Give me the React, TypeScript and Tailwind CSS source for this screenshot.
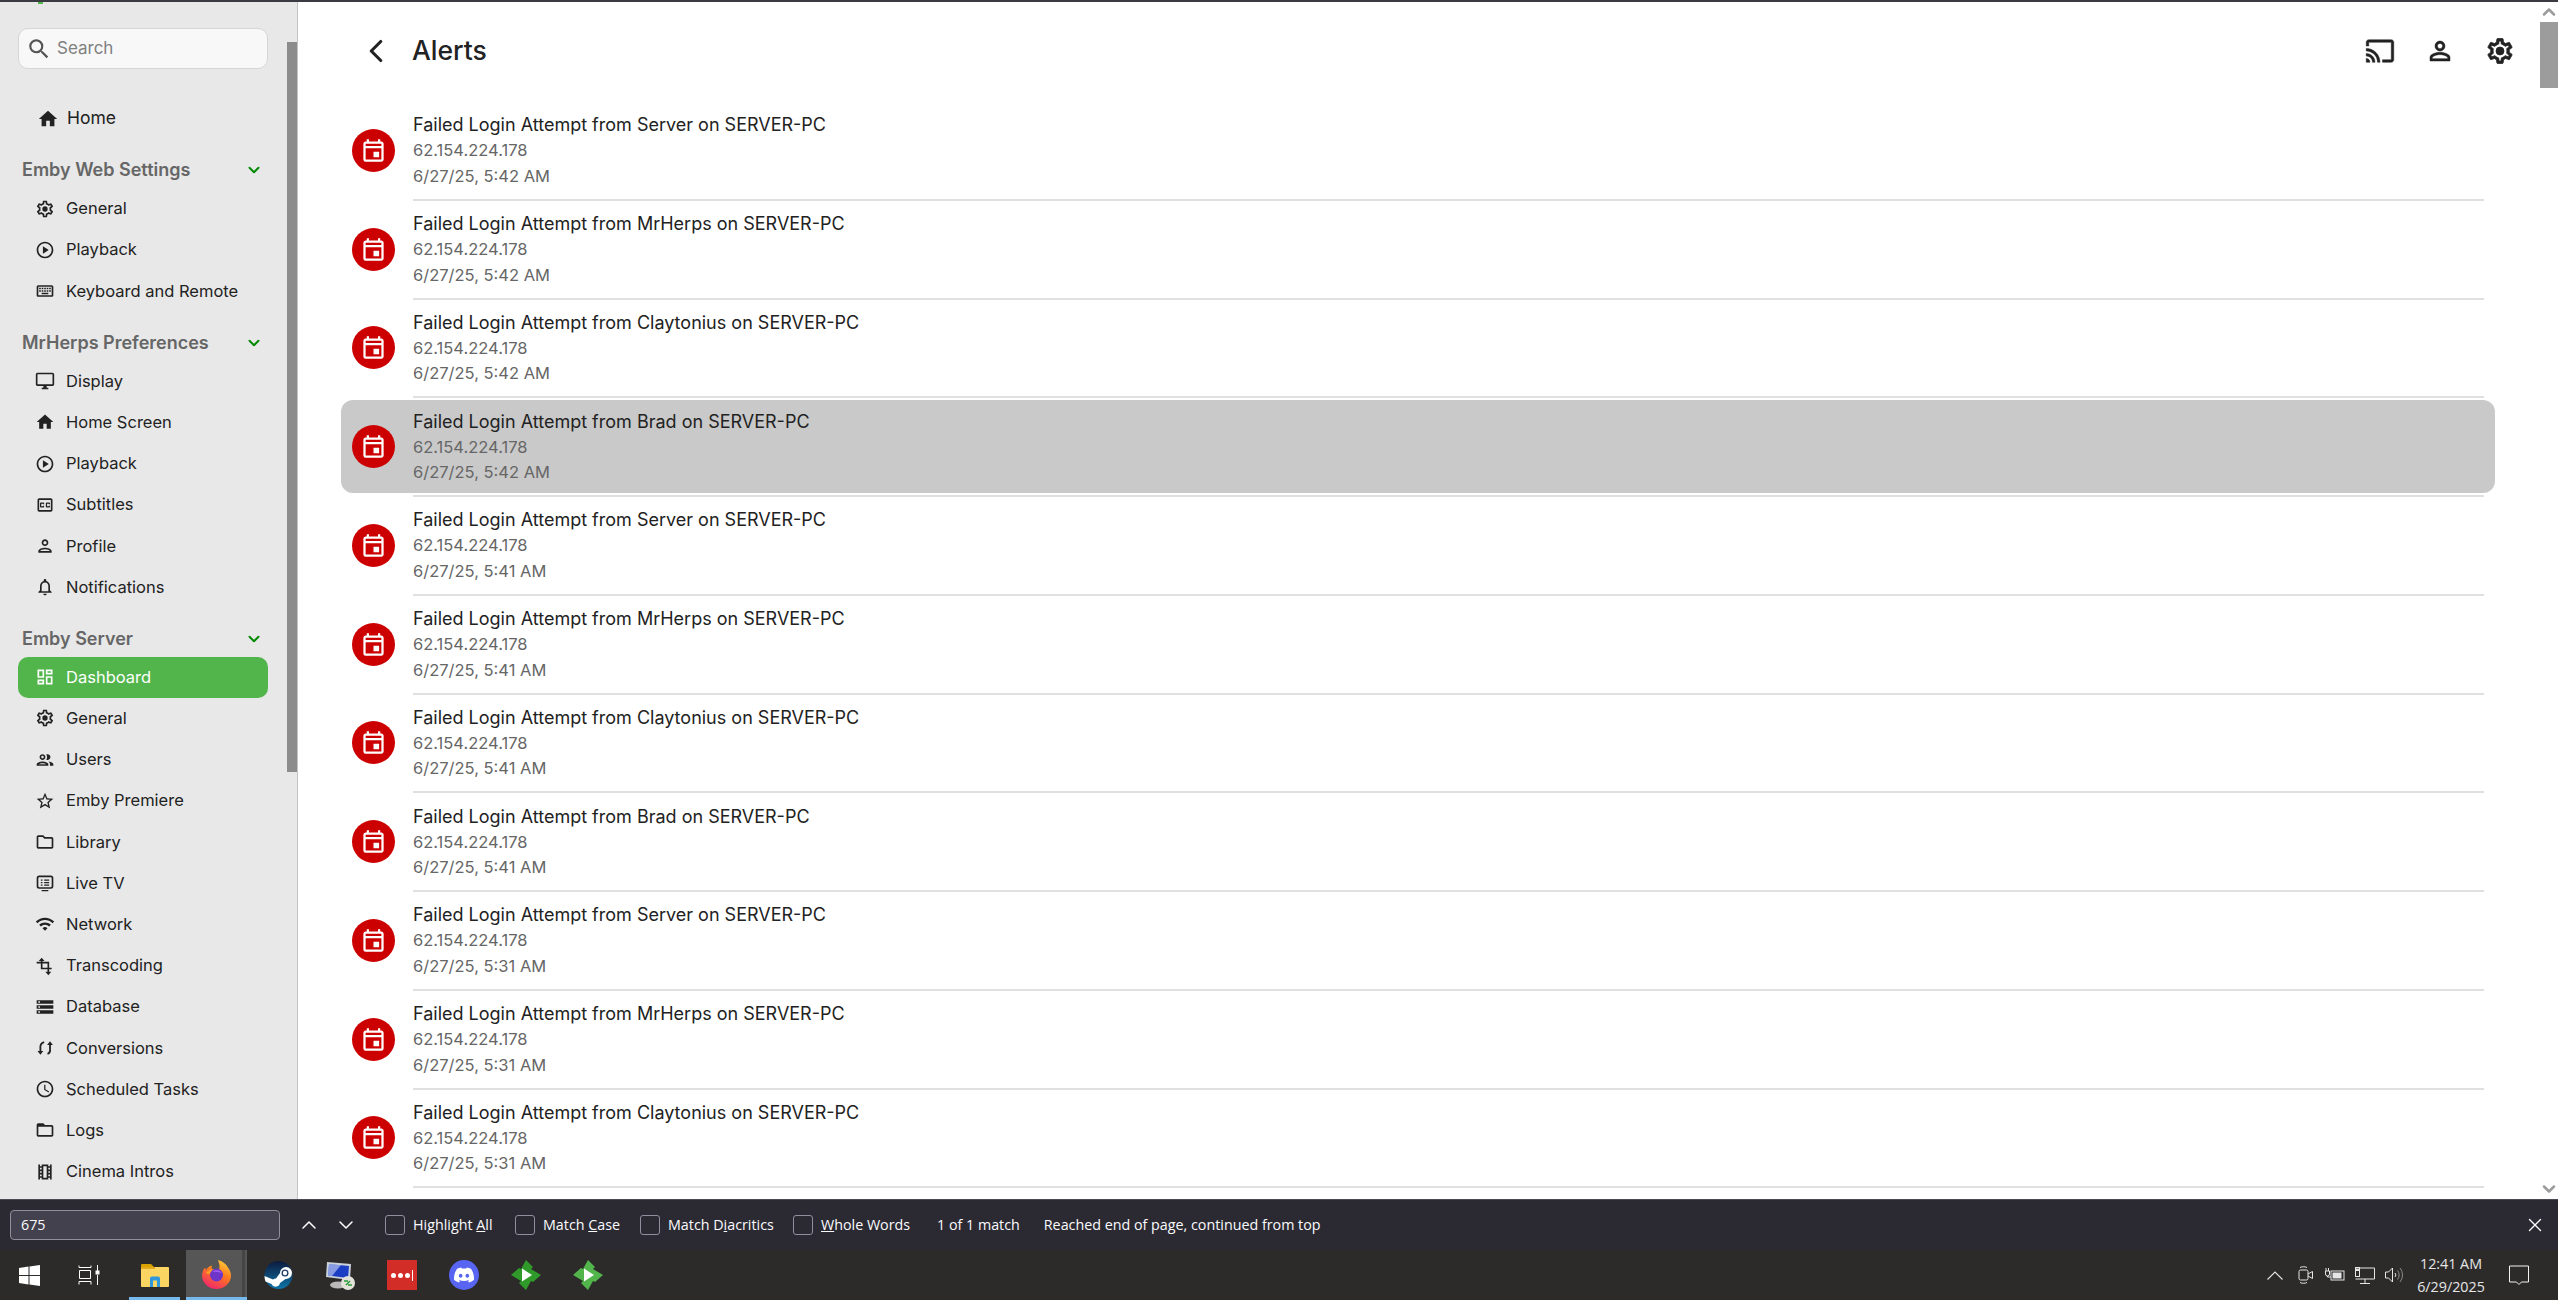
import React from 'react';
import {
  MdHome, MdOutlinePlayCircle, MdOutlineKeyboard, MdOutlineDesktopWindows,
  MdOutlineClosedCaption, MdOutlinePerson, MdOutlineNotifications, MdOutlineDashboard, MdOutlinePeople,
  MdOutlineStarBorder, MdOutlineFolder, MdWifi, MdStorage,
  MdOutlineSchedule, MdOutlineFolderOpen, MdOutlineLocalMovies, MdOutlineEvent, MdSearch,
} from 'react-icons/md';
import { ChevronDown, ChevronLeft, ChevronUp, X } from 'lucide-react';

const sans = "font-['Inter',sans-serif]";

type IconProps = { className?: string };
type NavItem = { label: string; icon: React.ComponentType<IconProps>; active?: boolean };

// outlined gear, the app draws it with a solid dot in the middle
const GearIcon = ({ className }: IconProps) => (
  <svg viewBox="0 0 24 24" fill="currentColor" className={className}>
    <path d="M19.43 12.98c.04-.32.07-.64.07-.98 0-.34-.03-.66-.07-.98l2.11-1.65c.19-.15.24-.42.12-.64l-2-3.46c-.09-.16-.26-.25-.44-.25-.06 0-.12.01-.17.03l-2.49 1c-.52-.4-1.08-.73-1.69-.98l-.38-2.65C14.46 2.18 14.25 2 14 2h-4c-.25 0-.46.18-.49.42l-.38 2.65c-.61.25-1.17.59-1.69.98l-2.49-1c-.06-.02-.12-.03-.18-.03-.17 0-.34.09-.43.25l-2 3.46c-.13.22-.07.49.12.64l2.11 1.65c-.04.32-.07.65-.07.98 0 .33.03.66.07.98l-2.11 1.65c-.19.15-.24.42-.12.64l2 3.46c.09.16.26.25.44.25.06 0 .12-.01.17-.03l2.49-1c.52.4 1.08.73 1.69.98l.38 2.65c.03.24.24.42.49.42h4c.25 0 .46-.18.49-.42l.38-2.65c.61-.25 1.17-.59 1.69-.98l2.49 1c.06.02.12.03.18.03.17 0 .34-.09.43-.25l2-3.46c.12-.22.07-.49-.12-.64l-2.11-1.65zm-1.98-1.71c.04.31.05.52.05.73 0 .21-.02.43-.05.73l-.14 1.13.89.7 1.08.84-.7 1.21-1.27-.51-1.04-.42-.9.68c-.43.32-.84.56-1.25.73l-1.06.43-.16 1.13-.2 1.35h-1.4l-.19-1.35-.16-1.13-1.06-.43c-.43-.18-.83-.41-1.23-.71l-.91-.7-1.06.43-1.27.51-.7-1.21 1.08-.84.89-.7-.14-1.13c-.03-.31-.05-.54-.05-.74s.02-.43.05-.73l.14-1.13-.89-.7-1.08-.84.7-1.21 1.27.51 1.04.42.9-.68c.43-.32.84-.56 1.25-.73l1.06-.43.16-1.13.2-1.35h1.39l.19 1.35.16 1.13 1.06.43c.43.18.83.41 1.23.71l.91.7 1.06-.43 1.27-.51.7 1.21-1.07.85-.89.7.14 1.13z" />
    <circle cx="12" cy="12" r="3.2" />
  </svg>
);

const CastIcon = ({ className }: IconProps) => (
  <svg viewBox="0 0 24 24" fill="currentColor" stroke="currentColor" strokeWidth="0.4" className={className}>
    <path d="M21 3H3c-1.100 0-2 .9-2 2v3h2V5h18v14h-7v2h7c1.100 0 2-.9 2-2V5c0-1.100-.9-2-2-2zM1 18v3h3c0-1.660-1.340-3-3-3zm0-4v2c2.760 0 5 2.240 5 5h2c0-3.870-3.130-7-7-7zm0-4v2c4.970 0 9 4.030 9 9h2c0-6.080-4.930-11-11-11z" />
  </svg>
);

const PersonIcon = ({ className }: IconProps) => (
  <svg viewBox="0 0 24 24" fill="currentColor" stroke="currentColor" strokeWidth="0.4" className={className}>
    <path d="M12 5.900c1.160 0 2.100.94 2.100 2.100s-.94 2.100-2.100 2.100S9.900 9.160 9.900 8s.94-2.100 2.100-2.100m0 9c2.970 0 6.100 1.460 6.100 2.100v1.100H5.900V17c0-.64 3.130-2.100 6.100-2.100M12 4C9.790 4 8 5.790 8 8s1.790 4 4 4 4-1.790 4-4-1.790-4-4-4zm0 9c-2.670 0-8 1.340-8 4v3h16v-3c0-2.660-5.330-4-8-4z" />
  </svg>
);

const LiveTvIcon = ({ className }: IconProps) => (
  <svg viewBox="0 0 24 24" fill="none" stroke="currentColor" strokeWidth="2" className={className}>
    <rect x="3" y="4" width="18" height="14" rx="2" />
    <path d="M8 21h8M7 8.500h2M11 8.500h6M7 11.500h2M11 11.500h6M7 14.500h2M11 14.500h6" strokeWidth="1.500" />
  </svg>
);

const TranscodeIcon = ({ className }: IconProps) => (
  <svg viewBox="0 0 24 24" fill="none" stroke="currentColor" strokeWidth="2" className={className}>
    <path d="M8 4v11h12M2 8h14v13" />
    <path d="M4.500 6 8 2l3.500 4ZM12.500 19h7L16 23Z" fill="currentColor" stroke="none" />
  </svg>
);

const ConvertIcon = ({ className }: IconProps) => (
  <svg viewBox="0 0 24 24" fill="none" stroke="currentColor" strokeWidth="2.200" className={className}>
    <path d="M11 5C7 6 6 9 6.500 13V18M15 19c2-.5 3.500-3 3-7V7" />
    <path d="M3 15.500h7L6.500 20ZM14.500 8.500h7L18 4Z" fill="currentColor" stroke="none" />
  </svg>
);

const webSettings: NavItem[] = [
  { label: 'General', icon: GearIcon },
  { label: 'Playback', icon: MdOutlinePlayCircle },
  { label: 'Keyboard and Remote', icon: MdOutlineKeyboard },
];

const preferences: NavItem[] = [
  { label: 'Display', icon: MdOutlineDesktopWindows },
  { label: 'Home Screen', icon: MdHome },
  { label: 'Playback', icon: MdOutlinePlayCircle },
  { label: 'Subtitles', icon: MdOutlineClosedCaption },
  { label: 'Profile', icon: MdOutlinePerson },
  { label: 'Notifications', icon: MdOutlineNotifications },
];

const server: NavItem[] = [
  { label: 'Dashboard', icon: MdOutlineDashboard, active: true },
  { label: 'General', icon: GearIcon },
  { label: 'Users', icon: MdOutlinePeople },
  { label: 'Emby Premiere', icon: MdOutlineStarBorder },
  { label: 'Library', icon: MdOutlineFolder },
  { label: 'Live TV', icon: LiveTvIcon },
  { label: 'Network', icon: MdWifi },
  { label: 'Transcoding', icon: TranscodeIcon },
  { label: 'Database', icon: MdStorage },
  { label: 'Conversions', icon: ConvertIcon },
  { label: 'Scheduled Tasks', icon: MdOutlineSchedule },
  { label: 'Logs', icon: MdOutlineFolderOpen },
  { label: 'Cinema Intros', icon: MdOutlineLocalMovies },
];

const alerts = [
  ['Server', '5:42'], ['MrHerps', '5:42'], ['Claytonius', '5:42'], ['Brad', '5:42'],
  ['Server', '5:41'], ['MrHerps', '5:41'], ['Claytonius', '5:41'], ['Brad', '5:41'],
  ['Server', '5:31'], ['MrHerps', '5:31'], ['Claytonius', '5:31'],
];

function SideItem({ item }: { item: NavItem }) {
  const Icon = item.icon;
  return (
    <div className={`flex h-[41.2px] items-center gap-[11px] rounded-[10px] pl-[17px] text-[16.5px] ${item.active ? 'bg-[#52b54b] text-white' : 'text-[#222222]'}`}>
      <Icon className="h-5 w-5 shrink-0" />
      <span>{item.label}</span>
    </div>
  );
}

function SideHeading({ title }: { title: string }) {
  return (
    <div className="flex h-[49px] items-end justify-between pb-[6px] pl-1 pr-[5px]">
      <span className="text-[18px] leading-6 font-semibold text-[#666666]">{title}</span>
      <ChevronDown className="mb-[3px] h-[18px] w-[18px] text-[#008a00]" strokeWidth={2.6} />
    </div>
  );
}

function Sidebar() {
  return (
    <aside className="relative h-full w-[298px] shrink-0 overflow-hidden border-r border-[#c4c4c4] bg-[#e8e8e8]">
      <div className="w-[250px] ml-[18px] pt-[26px]">
        <div className="flex h-[41px] items-center gap-[5px] rounded-[10px] border border-[#d6d6d6] bg-[#f8f8f8] pl-[7px] text-[17px] text-[#808080]">
          <MdSearch className="h-[26px] w-[26px] text-[#555555]" />
          <span>Search</span>
        </div>
        <div className="mt-[29px] flex h-[41px] items-center gap-[8px] pl-[19px] text-[17.5px] text-[#222222]">
          <MdHome className="h-[22px] w-[22px]" />
          <span>Home</span>
        </div>
        <SideHeading title="Emby Web Settings" />
        {webSettings.map((item) => <SideItem key={item.label} item={item} />)}
        <SideHeading title="MrHerps Preferences" />
        {preferences.map((item) => <SideItem key={item.label} item={item} />)}
        <SideHeading title="Emby Server" />
        {server.map((item) => <SideItem key={item.label} item={item} />)}
      </div>
      <div className="absolute top-0 left-[38px] h-[2px] w-[5px] bg-[#52b54b]" />
      <div className="absolute top-[40px] right-0 h-[730px] w-[10px] bg-[#8c8c8c]" />
    </aside>
  );
}

function AlertRow({ name, time, selected }: { name: string; time: string; selected?: boolean }) {
  return (
    <div className="flex h-[98.75px] flex-col">
      <div className={`flex flex-1 items-center gap-[18px] rounded-[12px] pl-[11px] my-[2px] ${selected ? 'bg-[#c9c9c9]' : ''}`}>
        <div className="flex h-[43px] w-[43px] shrink-0 items-center justify-center rounded-full bg-[#cc0000] text-white">
          <MdOutlineEvent className="h-[27px] w-[27px]" />
        </div>
        <div className="flex flex-col">
          <span className="text-[18px] leading-[26px] text-[#222222]">Failed Login Attempt from {name} on SERVER-PC</span>
          <span className="text-[16.5px] leading-[25.5px] text-[#666666]">62.154.224.178</span>
          <span className="text-[16.5px] leading-[24.5px] text-[#666666]">6/27/25, {time} AM</span>
        </div>
      </div>
      <div className="ml-[72px] mr-[11px] h-[2px] shrink-0 bg-[#e0e0e0]" />
    </div>
  );
}

function Main() {
  return (
    <main className="relative flex min-w-0 flex-1 overflow-hidden bg-white">
      <div className="min-w-0 flex-1 pl-[43px] pr-[45px]">
        <header className="flex h-[100px] items-center pb-[2px]">
          <ChevronLeft className="ml-[16px] h-[38px] w-[38px] shrink-0 text-[#222222]" strokeWidth={2} />
          <h1 className="ml-[17px] text-[26.5px] font-medium text-[#222222]">Alerts</h1>
          <div className="ml-auto mr-[-20px] flex items-center gap-[30px] text-[#222222]">
            <CastIcon className="h-[30px] w-[30px]" />
            <PersonIcon className="h-[30px] w-[30px]" />
            <GearIcon className="h-[30px] w-[30px] stroke-current stroke-[0.6px]" />
          </div>
        </header>
        {alerts.map(([name, time], i) => (
          <AlertRow key={i} name={name} time={time} selected={i === 3} />
        ))}
      </div>
      <div className="flex w-[18px] shrink-0 flex-col items-center justify-between">
        <div className="flex w-full flex-col items-center">
          <ChevronUp className="h-5 w-5 text-[#9c9c9c]" strokeWidth={3} />
          <div className="h-[66px] w-full bg-[#9c9c9c]" />
        </div>
        <ChevronDown className="h-5 w-5 text-[#9c9c9c]" strokeWidth={3} />
      </div>
    </main>
  );
}

function FindCheck({ label, width }: { label: [string, string, string]; width: string }) {
  return (
    <div className={`flex items-center gap-2 ${width}`}>
      <div className="h-5 w-5 shrink-0 rounded-[3px] border border-[#8f8f9d]" />
      <span className="whitespace-nowrap">
        {label[0]}<span className="underline">{label[1]}</span>{label[2]}
      </span>
    </div>
  );
}

function FindBar() {
  return (
    <div className="flex h-[51px] shrink-0 items-center border-t border-[#4a4a52] bg-[#2b2a33] pl-[10px] font-['Open_Sans',sans-serif] text-[14.3px] text-[#fbfbfe]">
      <div className="flex h-[30px] w-[270px] items-center rounded-[4px] border border-[#8f8f9d] bg-[#42414d] pl-[10px]">675</div>
      <ChevronUp className="ml-[17px] h-6 w-6 shrink-0 text-white" strokeWidth={1.5} />
      <ChevronDown className="ml-[13px] h-6 w-6 shrink-0 text-white" strokeWidth={1.5} />
      <div className="ml-[27px] flex items-center">
        <FindCheck label={['Highlight ', 'A', 'll']} width="w-[130px]" />
        <FindCheck label={['Match ', 'C', 'ase']} width="w-[125px]" />
        <FindCheck label={['Match D', 'i', 'acritics']} width="w-[153px]" />
        <FindCheck label={['', 'W', 'hole Words']} width="w-[144px]" />
      </div>
      <span className="whitespace-nowrap">1 of 1 match</span>
      <span className="ml-[24px] whitespace-nowrap">Reached end of page, continued from top</span>
      <X className="ml-auto mr-[12px] h-[22px] w-[22px] text-white" strokeWidth={1.5} />
    </div>
  );
}

const WindowsLogo = () => (
  <svg width="21" height="21" viewBox="0 0 21 21" fill="#ffffff">
    <path d="M0 3 9.5 1.6V10H0ZM10.5 1.4 21 0V10H10.5ZM0 11H9.5V19.4L0 18ZM10.5 11H21V21L10.5 19.6Z" />
  </svg>
);

const TaskView = () => (
  <svg width="22" height="22" viewBox="0 0 22 22" fill="none" stroke="#ffffff" strokeWidth="1">
    <path d="M1 1.5V3.5H13V1.5M1.5 6.5H12.5V14.5H1.5ZM1 20.5V17.5H13V20.5M19.5 1V7M19.5 11V21" />
    <rect x="18" y="7" width="3" height="3" fill="#ffffff" />
  </svg>
);

const Explorer = () => (
  <svg width="28" height="24" viewBox="0 0 28 24">
    <path d="M0 2a1 1 0 0 1 1-1h9l3 3H0Z" fill="#d9a300" />
    <rect x="0" y="4" width="28" height="20" rx="1" fill="#fbd561" />
    <rect x="0" y="4" width="14" height="2" fill="#e3ab1d" />
    <path d="M9 24V15.5a2 2 0 0 1 2-2h6a2 2 0 0 1 2 2V24h-3v-6.5h-4V24Z" fill="#2f97dc" />
  </svg>
);

const Firefox = () => (
  <svg width="29" height="30" viewBox="0 0 29 30">
    <defs>
      <linearGradient id="ffg" x1="0.8" y1="0" x2="0.3" y2="1">
        <stop offset="0" stopColor="#ffd23c" />
        <stop offset="0.45" stopColor="#ff7a1c" />
        <stop offset="1" stopColor="#f0246f" />
      </linearGradient>
    </defs>
    <path d="M14.5 29C6.5 29 0 23 0 15.5 0 12.5 1 9.5 3 7.5L4 10C5.5 7.5 7.5 6 10 5.5 9.5 7 9.6 8 10 9c3 0 5 .5 6 1.5 2-2 2-5 0-10.5 5 1.5 8 4 10 7.5 2 3 3 5.500 3 8 0 7.500-6.500 13.500-14.500 13.500Z" fill="url(#ffg)" />
    <path d="M4 13c2-3 5-4 8-3.500-1 1-2.500 2-3 3-1 2-3 1.500-5 .5Z" fill="#ff9b27" />
    <circle cx="14.500" cy="15" r="6.500" fill="#6e35c9" />
    <path d="M10 11.500c3-2 8-1.500 10 1.500-3-1-6-1-10-1.500Z" fill="#a45cf0" />
  </svg>
);

const Steam = () => (
  <svg width="29" height="28" viewBox="0 0 29 28">
    <defs>
      <linearGradient id="stg" x1="0.5" y1="0" x2="0.5" y2="1">
        <stop offset="0" stopColor="#0d1a3d" />
        <stop offset="1" stopColor="#0e74a8" />
      </linearGradient>
    </defs>
    <circle cx="14.500" cy="14" r="14" fill="url(#stg)" />
    <path d="M0.500 15 9 18.500a4.500 4.500 0 0 1 3-1L16 12a6 6 0 1 1 5.500 6L16 22a4.500 4.500 0 0 1-8.500 1L1.500 20.500A14 14 0 0 1 .5 15Z" fill="#ffffff" />
    <circle cx="21" cy="12" r="3.500" fill="#1d3a66" />
    <circle cx="21" cy="12" r="2.200" fill="#ffffff" />
  </svg>
);

const Rdp = () => (
  <svg width="31" height="31" viewBox="0 0 31 31">
    <ellipse cx="13" cy="25" rx="8" ry="3.500" fill="#b9b9b9" />
    <path d="M2 2 26 4 25 20 1 17Z" fill="#c9d1da" />
    <path d="M4 4 24 6 23 18 3 15.500Z" fill="#1b3fc4" />
    <path d="M4 4 16 5 7 16 3 15.500Z" fill="#dfe8fb" opacity="0.55" />
    <circle cx="23" cy="23" r="7" fill="#e3e3da" />
    <path d="M19 21h4M27 25h-4M21 25l4-4" stroke="#2b9b3a" strokeWidth="1.500" fill="none" />
  </svg>
);

const LastPass = () => (
  <div className="flex h-[30px] w-[30px] items-center justify-center gap-[2px] bg-[#d32d27]">
    <span className="h-[5px] w-[5px] rounded-full bg-white" />
    <span className="h-[5px] w-[5px] rounded-full bg-white" />
    <span className="h-[5px] w-[5px] rounded-full bg-white" />
    <span className="h-[11px] w-px bg-white" />
  </div>
);

const Discord = () => (
  <div className="flex h-[30px] w-[30px] items-center justify-center rounded-full bg-[#5865f2]">
    <svg width="20" height="16" viewBox="0 0 24 18" fill="#ffffff">
      <path d="M20.300 1.500A19.800 19.800 0 0 0 15.400 0l-.6 1.300a18.400 18.400 0 0 0-5.600 0L8.600 0a19.700 19.700 0 0 0-4.900 1.500C.6 6.100-.3 10.600.100 15a19.900 19.900 0 0 0 6 3l1.300-2c-.7-.3-1.400-.6-2-1l.5-.4a14.200 14.200 0 0 0 12.200 0l.5.4c-.6.400-1.300.7-2 1l1.300 2a19.900 19.900 0 0 0 6-3c.5-5.100-.8-9.500-3.600-13.500ZM8 12.300c-1.200 0-2.200-1.100-2.200-2.400S6.800 7.500 8 7.500s2.200 1.100 2.200 2.400-1 2.400-2.200 2.400Zm8 0c-1.200 0-2.200-1.100-2.200-2.400s1-2.400 2.200-2.400 2.200 1.100 2.200 2.400-1 2.400-2.200 2.400Z" />
    </svg>
  </div>
);

const Emby = ({ dark }: { dark?: boolean }) => (
  <svg width="30" height="30" viewBox="0 0 30 30">
    <path d="M15 0 22 7 20 9 30 15 22 22 20 21 15 30 8 23 10 21 0 15 8 8 10 9Z" fill={dark ? '#2f9a2a' : '#52b54b'} />
    <path d="M11 8.500 21 15 11 21.500Z" fill="#ffffff" />
  </svg>
);

function Tray() {
  return (
    <div className="ml-auto flex h-full items-center text-[#e6e6e6]">
      <svg width="16" height="9" viewBox="0 0 16 9" fill="none" stroke="#e6e6e6" strokeWidth="1.100" className="mr-[15px]"><path d="M0.500 8.500 8 1l7.500 7.500" /></svg>
      <svg width="16" height="18" viewBox="0 0 16 18" fill="none" stroke="#e6e6e6" strokeWidth="1" className="mr-[11px]">
        <rect x="1" y="4" width="9" height="10" rx="1.500" />
        <path d="M10 8 14.500 5.500V12.500L10 10M2 1.500C4 .5 7 .5 9 1.500M2 16.500C4 17.500 7 17.500 9 16.500" />
      </svg>
      <svg width="20" height="14" viewBox="0 0 20 14" fill="none" stroke="#e6e6e6" strokeWidth="1" className="mr-[10px]">
        <rect x="6" y="3" width="13" height="9" />
        <rect x="7.500" y="4.500" width="9" height="6" fill="#e6e6e6" stroke="none" />
        <path d="M1 3V0M3.500 3V0M0.500 3H4.500V6A2 2 0 0 1 0.500 6ZM2.500 8V9H6" />
      </svg>
      <svg width="20" height="17" viewBox="0 0 20 17" fill="none" stroke="#e6e6e6" strokeWidth="1" className="mr-[10px]">
        <path d="M5 1H19.500V12H0.500M10 12V16M5 16.500H15" />
        <rect x="0.500" y="0.500" width="4" height="9" />
        <rect x="1.500" y="2" width="2" height="1.500" />
      </svg>
      <svg width="20" height="16" viewBox="0 0 20 16" fill="none" stroke="#e6e6e6" strokeWidth="1" className="mr-[8px]">
        <path d="M0.500 5H3.500L7.500 1V15L3.500 11H0.500Z" />
        <path d="M10 6A3 3 0 0 1 10 10" />
        <path d="M12.500 3.500A7 7 0 0 1 12.500 12.500M15 1A11 11 0 0 1 15 15" stroke="#8c8c8c" />
      </svg>
      <div className="flex w-[76px] flex-col items-center text-[14.3px] leading-[23px] whitespace-nowrap">
        <span>12:41 AM</span>
        <span>6/29/2025</span>
      </div>
      <svg width="20" height="20" viewBox="0 0 20 20" fill="none" stroke="#f2f2f2" strokeWidth="1" className="ml-[20px] mr-[29px]">
        <path d="M0.500 1H19.500V17H12.500L10 19.500 7.500 17H0.500Z" />
      </svg>
    </div>
  );
}

function Taskbar() {
  const slot = 'flex h-full shrink-0 items-center justify-center';
  return (
    <div className="flex h-[50px] shrink-0 bg-[#2c2b2a] font-['Open_Sans',sans-serif]">
      <div className={`${slot} w-[58px]`}><WindowsLogo /></div>
      <div className={`${slot} w-[62px]`}><TaskView /></div>
      <div className={`${slot} relative ml-[9px] w-[51px]`}>
        <Explorer />
        <div className="absolute inset-x-0 bottom-0 h-[3px] bg-[#76b9ed]" />
      </div>
      <div className={`${slot} relative ml-[6px] w-[61px] bg-[#565656]`}>
        <Firefox />
        <div className="absolute inset-y-0 right-[2px] w-[3px] bg-[#454545]" />
        <div className="absolute inset-x-0 bottom-0 h-[3px] bg-[#76b9ed]" />
      </div>
      <div className={`${slot} w-[62px]`}><Steam /></div>
      <div className={`${slot} w-[62px]`}><Rdp /></div>
      <div className={`${slot} w-[62px]`}><LastPass /></div>
      <div className={`${slot} w-[62px]`}><Discord /></div>
      <div className={`${slot} w-[62px]`}><Emby dark /></div>
      <div className={`${slot} w-[62px]`}><Emby /></div>
      <Tray />
    </div>
  );
}

export default function App() {
  return (
    <div className={`flex h-[1300px] w-[2558px] flex-col overflow-hidden bg-white ${sans}`}>
      <div className="h-[2px] shrink-0 bg-[#3a3a42]" />
      <div className="flex min-h-0 flex-1">
        <Sidebar />
        <Main />
      </div>
      <FindBar />
      <Taskbar />
    </div>
  );
}
